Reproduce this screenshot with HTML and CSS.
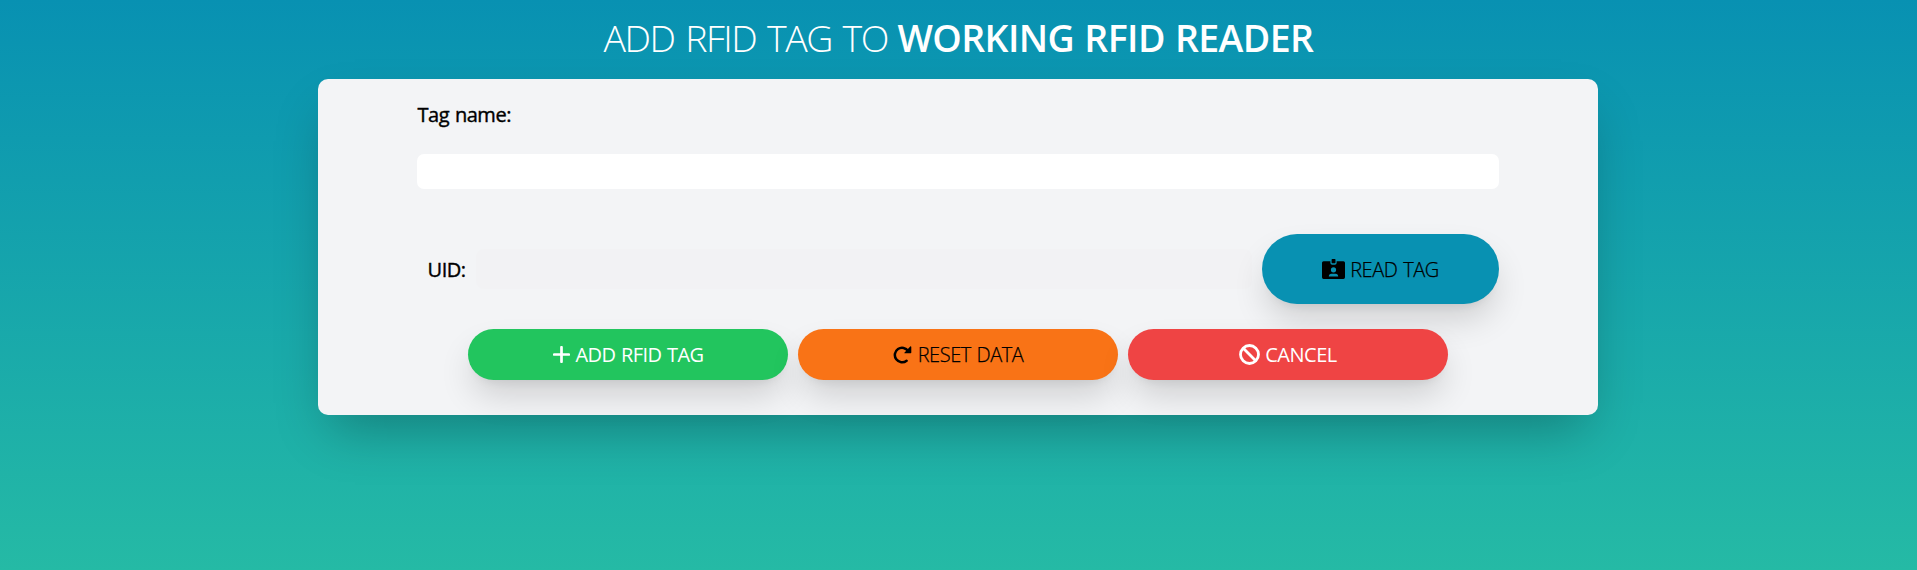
FILE: index.html
```html
<!DOCTYPE html>
<html lang="en">
<head>
<meta charset="utf-8">
<title>Add RFID tag</title>
<link rel="stylesheet" href="styles.css">
</head>
<body>
<h1 class="title"><span class="title-light">ADD RFID TAG TO</span> <span class="title-strong">WORKING RFID READER</span></h1>
<form class="card">
  <label class="name-label" for="name"><span>Tag name:</span></label>
  <input class="name-input" id="name" type="text">
  <div class="uid-row">
    <label class="uid-label" for="uid"><span>UID:</span></label>
    <input class="uid-input" id="uid" type="text" disabled>
    <button class="btn btn-read" type="button">
      <svg class="icon-badge" viewBox="0 0 22 20"><path fill="currentColor" fill-rule="evenodd" d="M1.500 2H8v1.800Q8 5.500 9.700 5.500h2.600Q14 5.500 14 3.800V2h6.500Q22 2 22 3.500v14Q22 19 20.500 19h-19Q0 19 0 17.500v-14Q0 2 1.500 2ZM11 7.800a2.500 2.500 0 1 0 0 5a2.500 2.500 0 0 0 0-5ZM9 14C7.400 14 6.500 15 6.500 16.700h9c0-1.700-.9-2.700-2.500-2.700Z"/><rect x="9.200" y="0" width="3.700" height="4" rx=".6" fill="currentColor"/></svg>
      <span class="t-read">READ TAG</span>
    </button>
  </div>
  <div class="actions">
    <button class="btn btn-add" type="button">
      <svg class="icon-plus" viewBox="0 0 17 17"><path d="M8.500 1.200v14.600M1.200 8.500h14.600" fill="none" stroke="currentColor" stroke-width="2.700" stroke-linecap="round"/></svg>
      <span class="t-add">ADD RFID TAG</span>
    </button>
    <button class="btn btn-reset" type="button">
      <svg class="icon-redo" viewBox="0 0 19 18"><path d="M15.200 5.100A7.250 7.250 0 1 0 13.600 14.700" fill="none" stroke="currentColor" stroke-width="2.500" stroke-linecap="round"/><path d="M18.300 .9v5.700q0 .7-.7.700h-5.700q-1 0-.3-.8L17.200.5q.9-.8 1.100.4Z" fill="currentColor"/></svg>
      <span class="t-reset">RESET DATA</span>
    </button>
    <button class="btn btn-cancel" type="button">
      <svg class="icon-ban" viewBox="0 0 21 21"><circle cx="10.500" cy="10.500" r="9" fill="none" stroke="currentColor" stroke-width="2.800"/><path d="M4.300 4.300l12.400 12.400" stroke="currentColor" stroke-width="2.800"/></svg>
      <span class="t-cancel">CANCEL</span>
    </button>
  </div>
</form>
</body>
</html>
```
FILE: styles.css
```css
* { box-sizing: border-box; }
html { height: 100%; }
body {
  margin: 0;
  height: 100%;
  padding-right: 1px;
  overflow: hidden;
  display: flex;
  flex-direction: column;
  align-items: center;
  background: linear-gradient(#0891b2, #25baa5);
  font-family: "Open Sans", "Noto Sans", sans-serif;
  color: #000;
}
.title {
  margin: 0;
  height: 79px;
  display: flex;
  gap: 11px;
  align-items: flex-start;
  padding: 12px 0 0 1px;
  color: #fff;
  font-size: 37.500px;
  line-height: 52px;
  white-space: nowrap;
}
.title-light { font-weight: 300; width: 283px; letter-spacing: -1.5px; word-spacing: 2.5px; }
.title-strong { font-weight: 600; width: 416px; letter-spacing: -.6px; word-spacing: 1px; }
.card {
  width: 1280px;
  height: 336px;
  padding: 20px 99px 0;
  display: flex;
  flex-direction: column;
  border-radius: 10px;
  background: #f3f4f6;
  box-shadow: 0 25px 50px -12px rgba(0, 0, 0, .27);
}
.name-label, .uid-label {
  font-size: 20px;
  line-height: 32px;
  white-space: nowrap;
  letter-spacing: -.45px;
  word-spacing: 1px;
  -webkit-text-stroke: .4px #000;
}
.name-label { padding-left: .5px; }
.name-input {
  width: 1082px;
  height: 35px;
  margin-top: 23px;
  border: 0;
  border-radius: 7px;
  background: #fff;
}
.uid-row { display: flex; align-items: center; margin-top: 45px; height: 70px; padding-left: 10px; }
.uid-label { width: 49px; padding: 2px 0 0 .5px; }
.uid-input { width: 776px; height: 40px; border: 0; padding: 0; border-radius: 8px; background: #f2f2f4; }
.btn {
  display: flex;
  align-items: center;
  justify-content: center;
  border: 0;
  padding: 0;
  border-radius: 35px;
  font: 400 20px/32px "Open Sans", "Noto Sans", sans-serif;
  color: #000;
  white-space: nowrap;
  box-shadow: 0 18px 34px -4px rgba(0, 0, 0, .16), 0 8px 10px -6px rgba(0, 0, 0, .07);
}
.btn-read { width: 237px; height: 70px; margin-left: 10px; background: #0891b2; }
.btn-read span { padding-top: 2px; }
.actions { display: flex; gap: 10px; justify-content: center; margin-top: 25px; }
.btn-add, .btn-reset, .btn-cancel { width: 320px; height: 51px; }
.btn-add { background: #22c55e; color: #fff; }
.btn-reset { background: #f97316; }
.btn-cancel { background: #ef4444; color: #fff; }
.t-read, .t-reset { font-weight: 300; letter-spacing: -.45px; word-spacing: 1px; -webkit-text-stroke: .25px #000; }
.t-add { letter-spacing: -.6px; word-spacing: 1px; }
.t-cancel { letter-spacing: -.5px; }
.icon-badge { width: 23px; height: 21px; margin-right: 5px; }
.icon-plus { width: 17px; height: 17px; margin-right: 6px; }
.icon-redo { width: 19px; height: 18px; margin-right: 6px; }
.icon-ban { width: 21px; height: 21px; margin-right: 5px; }
```
